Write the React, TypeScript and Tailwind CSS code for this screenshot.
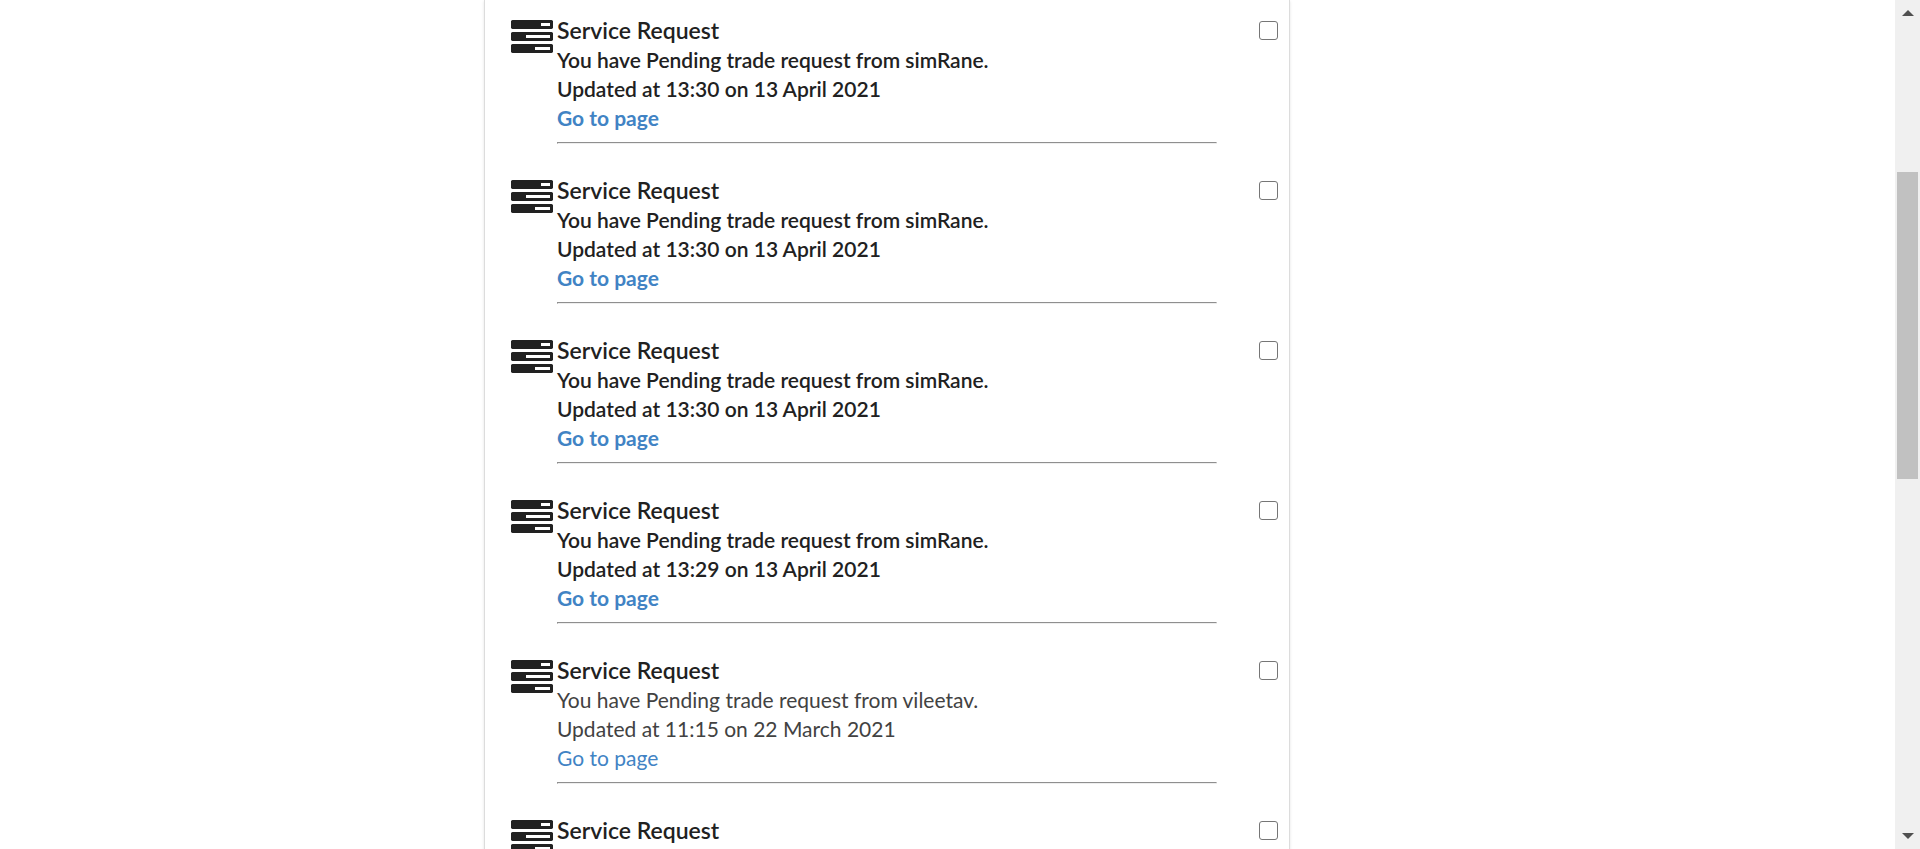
type Notice = {
  id: number;
  detail?: { sender: string; updated: string; unread: boolean };
};

const notices: Notice[] = [
  { id: 1, detail: { sender: "simRane", updated: "13:30 on 13 April 2021", unread: true } },
  { id: 2, detail: { sender: "simRane", updated: "13:30 on 13 April 2021", unread: true } },
  { id: 3, detail: { sender: "simRane", updated: "13:30 on 13 April 2021", unread: true } },
  { id: 4, detail: { sender: "simRane", updated: "13:29 on 13 April 2021", unread: true } },
  { id: 5, detail: { sender: "vileetav", updated: "11:15 on 22 March 2021", unread: false } },
  { id: 6 },
];

function TasksIcon() {
  return (
    <svg
      viewBox="0 128 1792 1408"
      className="mt-[5px] h-[33px] w-[42px] shrink-0 fill-[#212121]"
      aria-hidden="true"
    >
      <path d="M1024 1408h640v-128h-640v128zm-384-512h1024v-128h-1024v128zm640-512h384v-128h-384v128zm512 832v256q0 26-19 45t-45 19h-1664q-26 0-45-19t-19-45v-256q0-26 19-45t45-19h1664q26 0 45 19t19 45zm0-512v256q0 26-19 45t-45 19h-1664q-26 0-45-19t-19-45v-256q0-26 19-45t45-19h1664q26 0 45 19t19 45zm0-512v256q0 26-19 45t-45 19h-1664q-26 0-45-19t-19-45v-256q0-26 19-45t45-19h1664q26 0 45 19t19 45z" />
    </svg>
  );
}

function NoticeRow({ notice }: { notice: Notice }) {
  const boxId = `notice-${notice.id}`;
  const { detail } = notice;
  return (
    <li className="flex items-start pb-[31px]">
      <TasksIcon />
      <div className="ml-1 min-w-0 flex-1">
        <label htmlFor={boxId} className="block text-[23px] leading-[30px] font-semibold text-[#212121]">
          Service Request
        </label>
        {detail && (
          <>
            <div
              className={
                detail.unread
                  ? "text-[21px] leading-[29px] font-semibold text-[#212121]"
                  : "text-[21px] leading-[29px] font-normal text-[#424242]"
              }
            >
              <p>You have Pending trade request from {detail.sender}.</p>
              <p>Updated at {detail.updated}</p>
              <a
                href="#page"
                className={detail.unread ? "block w-fit font-bold text-[#4183c4]" : "block w-fit text-[#4183c4]"}
              >
                Go to page
              </a>
            </div>
            <hr className="mt-2.5 border border-t-[#8f8f8f] border-r-[#eeeeee] border-b-[#eeeeee] border-l-[#8f8f8f]" />
          </>
        )}
      </div>
      <input
        id={boxId}
        type="checkbox"
        className="mt-[6px] ml-[42px] size-[19px] shrink-0 appearance-none rounded-[3px] border border-[#767676] bg-white checked:bg-[#4183c4]"
      />
    </li>
  );
}

function ScrollRail() {
  return (
    <div className="flex w-[25px] shrink-0 flex-col items-center justify-between bg-[#f0f0f0] py-2.5" aria-hidden="true">
      <svg viewBox="0 0 12 6" className="h-1.5 w-3 fill-[#505050]">
        <path d="M6 0 12 6H0z" />
      </svg>
      <div className="flex w-[21px] flex-1 flex-col">
        <div className="grow-[156]" />
        <div className="grow-[307] bg-[#c1c1c1]" />
        <div className="grow-[354]" />
      </div>
      <svg viewBox="0 0 12 6" className="h-1.5 w-3 fill-[#505050]">
        <path d="M0 0H12L6 6z" />
      </svg>
    </div>
  );
}

export default function App() {
  return (
    <div className="flex h-screen overflow-hidden bg-white font-['Lato',sans-serif]">
      <main className="min-w-0 flex-1 overflow-hidden">
        <ul className="ml-[25.54%] min-h-full w-[42.53%] border-x border-[#dcdcdc] pt-[15px] pr-[11px] pl-[26px] shadow-sm">
          {notices.map((notice) => (
            <NoticeRow key={notice.id} notice={notice} />
          ))}
        </ul>
      </main>
      <ScrollRail />
    </div>
  );
}
